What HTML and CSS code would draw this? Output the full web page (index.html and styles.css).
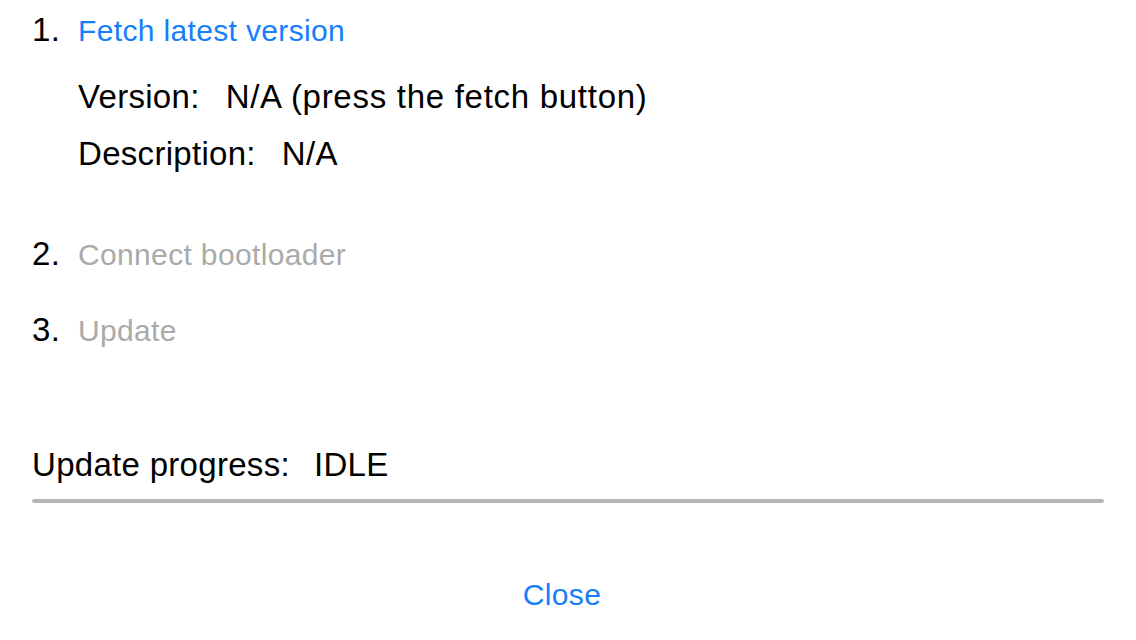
FILE: index.html
```html
<!DOCTYPE html>
<html>
<head>
<meta charset="utf-8">
<link rel="stylesheet" href="styles.css">
</head>
<body>
<div class="panel">
  <div class="step step-first">
    <span class="num">1.</span>
    <span class="btn link">Fetch latest version</span>
  </div>
  <div class="info">
    <div class="field">
      <span class="field-label">Version:</span>
      <span class="field-value value-wide">N/A (press the fetch button)</span>
    </div>
    <div class="field field-desc">
      <span class="field-label">Description:</span>
      <span class="field-value">N/A</span>
    </div>
  </div>
  <div class="step step-second">
    <span class="num">2.</span>
    <span class="btn disabled">Connect bootloader</span>
  </div>
  <div class="step step-third">
    <span class="num">3.</span>
    <span class="btn disabled">Update</span>
  </div>
  <div class="field progress-label">
    <span class="field-label">Update progress:</span>
    <span class="field-value">IDLE</span>
  </div>
  <div class="progress-track"></div>
  <div class="actions">
    <span class="btn link">Close</span>
  </div>
</div>
</body>
</html>
```
FILE: styles.css
```css
html, body {
  margin: 0;
  padding: 0;
  background: #ffffff;
}
body {
  font-family: "Liberation Sans", Arial, sans-serif;
  font-size: 33px;
  line-height: 36px;
  color: #000000;
  letter-spacing: 0.3px;
}
.panel {
  display: flex;
  flex-direction: column;
  padding: 12px 32px 0 32px;
}
.step {
  display: flex;
  align-items: baseline;
}
.num {
  width: 46px;
  flex: none;
}
.btn {
  font-size: 30px;
  letter-spacing: 0.35px;
}
.link {
  color: #157efb;
}
.disabled {
  color: #aaaaaa;
}
.info {
  display: flex;
  flex-direction: column;
  padding-left: 46px;
  margin-top: 30px;
}
.field {
  display: flex;
  align-items: baseline;
  gap: 26px;
}
.value-wide {
  letter-spacing: 0.72px;
}
.field-desc {
  margin-top: 21px;
}
.step-second {
  margin-top: 64px;
}
.step-third {
  margin-top: 39px;
}
.progress-label {
  margin-top: 98px;
  gap: 24px;
}
.progress-track {
  margin-top: 16px;
  height: 4px;
  border-radius: 2px;
  background: #b5b5b5;
  width: 1072px;
}
.actions {
  display: flex;
  justify-content: center;
  margin-top: 74px;
  padding-right: 12px;
}
```
